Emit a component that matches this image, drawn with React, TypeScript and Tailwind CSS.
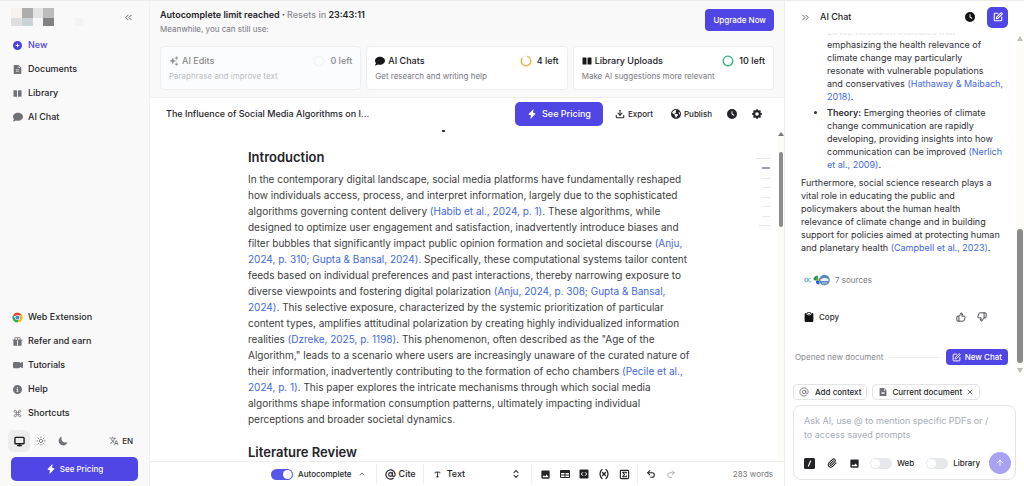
import { useState } from 'react';
import type { ReactNode } from 'react';
import { FaCirclePlus, FaComment, FaCircleInfo, FaClock, FaEarthAmericas } from 'react-icons/fa6';
import { BsCameraVideoFill, BsClipboardFill, BsGearFill } from 'react-icons/bs';
import { RiGiftFill } from 'react-icons/ri';
import { MdTranslate, MdImage } from 'react-icons/md';
import { IoMoon } from 'react-icons/io5';
import { PiFileTextFill, PiLightningFill } from 'react-icons/pi';
import {
  ArrowUp,
  AtSign,
  ChevronsLeft,
  ChevronsRight,
  ChevronsUpDown,
  ChevronUp,
  Command,
  Download,
  Monitor,
  Paperclip,
  Redo2,
  SquarePen,
  SquareSigma,
  Sun,
  ThumbsDown,
  ThumbsUp,
  Type,
  Undo2,
  Variable,
  X,
} from 'lucide-react';

function BookIcon({ className }: { className?: string }) {
  return (
    <svg viewBox="0 0 20 20" fill="currentColor" className={className} aria-hidden="true">
      <path d="M2 3h5.5c.8 0 1.5.5 1.5 1.200V17H2a1 1 0 0 1-1-1V4a1 1 0 0 1 1-1zM18 3h-5.500c-.8 0-1.500.5-1.500 1.200V17h7a1 1 0 0 0 1-1V4a1 1 0 0 0-1-1z" />
    </svg>
  );
}

function ChromeIcon({ className }: { className?: string }) {
  return (
    <svg viewBox="0 0 24 24" className={className} aria-hidden="true">
      <path d="M12 12 2.470 6.500A11 11 0 0 1 21.530 6.500L12 6.500z" fill="#ea4335" />
      <path d="M12 12 7.240 14.750 2.470 6.500A11 11 0 0 0 12 23l4.760-8.250z" fill="#34a853" />
      <path d="M12 6.500h9.530A11 11 0 0 1 12 23l4.760-8.250z" fill="#fbbc05" />
      <path d="M2.470 6.500 12 12V6.500z" fill="#ea4335" />
      <circle cx="12" cy="12" r="5.500" fill="#fff" />
      <circle cx="12" cy="12" r="4.300" fill="#4285f4" />
    </svg>
  );
}

function SparkleIcon({ className }: { className?: string }) {
  return (
    <svg viewBox="0 0 24 24" fill="currentColor" className={className} aria-hidden="true">
      <path d="M9 5c.7 4.500 2.500 6.300 7 7-4.500.7-6.300 2.500-7 7-.7-4.500-2.500-6.300-7-7 4.500-.7 6.300-2.500 7-7z" stroke="currentColor" />
      <path d="M18 1c.4 2.800 1.300 3.700 4 4-2.700.4-3.600 1.300-4 4-.4-2.700-1.300-3.600-4-4 2.700-.3 3.600-1.200 4-4zM18 16c.4 2.400 1.200 3.200 3.500 3.500-2.300.4-3.100 1.200-3.500 3.500-.4-2.300-1.200-3.100-3.500-3.500 2.300-.3 3.100-1.100 3.500-3.500z" stroke="currentColor" />
    </svg>
  );
}

function TableIcon({ className }: { className?: string }) {
  return (
    <svg viewBox="0 0 20 16" className={className} aria-hidden="true">
      <rect x="0" y="0" width="20" height="16" rx="2" fill="currentColor" />
      <path d="M2 6h7v3H2zM11 6h7v3h-7zM2 11h7v3H2zM11 11h7v3h-7z" fill="#fff" />
    </svg>
  );
}

function CodeIcon({ className }: { className?: string }) {
  return (
    <svg viewBox="0 0 20 20" className={className} aria-hidden="true">
      <rect x="1" y="1" width="18" height="18" rx="2" fill="currentColor" />
      <path d="M8 6.500 4.500 10 8 13.500M12 6.500l3.500 3.500-3.500 3.500" stroke="#fff" strokeWidth="2" fill="none" />
    </svg>
  );
}

function SlashIcon({ className }: { className?: string }) {
  return (
    <svg viewBox="0 0 22 22" className={className} aria-hidden="true">
      <rect width="22" height="22" rx="3" fill="currentColor" />
      <path d="M13.500 5 8.500 17" stroke="#fff" strokeWidth="2.200" />
    </svg>
  );
}

function SourceIcons() {
  return (
    <svg viewBox="0 0 26 12" className="h-3 w-[26px]" fill="none" aria-hidden="true">
      <circle cx="2.500" cy="6" r="1.700" stroke="#4aa3d9" strokeWidth=".9" />
      <path d="M6.800 4.200C5 4.200 4.300 5 4.200 6s.8 1.800 2.600 1.800" stroke="#4aa3d9" strokeWidth=".9" />
      <path d="M14 1.500a4.500 4.500 0 0 0-4.500 4.500l4.500 1z" fill="#34a853" />
      <path d="M9.500 4.500 12 2.500v4z" fill="#1f8f52" />
      <path d="M12.500 6 16 4v3z" fill="#f59e0b" />
      <path d="m12 7 3.500-.5v4A4.500 4.500 0 0 1 12 9z" fill="#2563eb" />
      <circle cx="20.500" cy="6" r="5.300" fill="#5b87bd" />
      <path d="M16.500 5.500c2-2 6-2 8 0v1.500h-8z" fill="#e8f0f8" />
      <path d="M18 9h5" stroke="#c7dbef" />
    </svg>
  );
}

function Quota({ color, dash }: { color: string; dash?: string }) {
  return (
    <svg viewBox="0 0 12 12" className="size-3" fill="none" aria-hidden="true">
      <circle cx="6" cy="6" r="4.800" stroke="#f1f1f2" strokeWidth="1.200" />
      {dash && <circle cx="6" cy="6" r="4.800" stroke={color} strokeWidth="1.400" strokeDasharray={dash} transform="rotate(-75 6 6)" />}
    </svg>
  );
}

function Cite({ children }: { children: ReactNode }) {
  return <a href="#" className="text-[#4169e1]">{children}</a>;
}

function Toggle({ id, on = false }: { id: string; on?: boolean }) {
  const [checked, setChecked] = useState(on);
  return (
    <input
      id={id}
      type="checkbox"
      role="switch"
      checked={checked}
      onChange={() => setChecked(!checked)}
      className="flex h-[11px] w-[22px] shrink-0 appearance-none items-center rounded-full bg-gray-200 p-px before:size-[9px] before:rounded-full before:bg-white checked:justify-end checked:bg-[#5457e8]"
    />
  );
}

const mainNav = [
  { label: 'New', icon: <FaCirclePlus className="size-[9px]" />, active: true },
  { label: 'Documents', icon: <PiFileTextFill className="size-[11px]" /> },
  { label: 'Library', icon: <BookIcon className="size-[9px]" /> },
  { label: 'AI Chat', icon: <FaComment className="size-[10px]" /> },
];

const helpNav = [
  { label: 'Web Extension', icon: <ChromeIcon className="size-[11px]" /> },
  { label: 'Refer and earn', icon: <RiGiftFill className="size-[11px]" /> },
  { label: 'Tutorials', icon: <BsCameraVideoFill className="size-[10px]" /> },
  { label: 'Help', icon: <FaCircleInfo className="size-[9px]" /> },
  { label: 'Shortcuts', icon: <Command className="size-[9px]" /> },
];

function NavItem({ label, icon, active }: { label: string; icon: ReactNode; active?: boolean }) {
  return (
    <a href="#" className={`flex h-6 items-center gap-[5px] pl-3 text-[9px] font-medium ${active ? 'text-[#4a42e0]' : 'text-[#242428]'}`}>
      <span className={`flex w-[11px] justify-center ${active ? '' : 'text-[#717178]'}`}>{icon}</span>
      {label}
    </a>
  );
}

function Sidebar() {
  return (
    <aside className="flex w-[150px] shrink-0 flex-col border-r border-[#f0f0f1] bg-[#f9f9fa] pb-[5px]">
      <div className="flex h-8 shrink-0 items-center justify-between pl-[11px] pr-[15px]">
        <svg viewBox="0 0 72 18" className="h-[18px] w-[72px]" aria-label="Logo" role="img">
          <path d="M0 0h11v10H0z" fill="#f7f2ef" />
          <path d="M11 0h11v10H11z" fill="#adadad" />
          <path d="M22 0h10v10H22z" fill="#e3e3e3" />
          <path d="M32 0h11v10H32z" fill="#bcbcbc" />
          <path d="M0 10h11v8H0z" fill="#dfdfdf" />
          <path d="M11 10h11v8H11z" fill="#cad3d8" />
          <path d="M22 10h10v8H22z" fill="#f6f6f6" />
          <path d="M32 10h11v8H32z" fill="#828284" />
          <path d="M64 10h8v8h-8z" fill="#f3f3f3" />
        </svg>
        <button aria-label="Collapse sidebar"><ChevronsLeft className="size-[11px] text-[#55555b]" /></button>
      </div>
      <nav className="flex flex-1 flex-col">
        {mainNav.map((item) => <NavItem key={item.label} {...item} />)}
        <div className="flex-1" />
        {helpNav.map((item) => <NavItem key={item.label} {...item} />)}
      </nav>
      <div className="flex items-center py-[5px] pl-2 pr-4">
        <button aria-label="System theme" className="flex size-[22px] items-center justify-center rounded-md bg-[#ececed]">
          <Monitor className="size-[11px] text-[#18181b]" strokeWidth={3} />
        </button>
        <button aria-label="Light theme" className="flex size-[22px] items-center justify-center text-[#717178]"><Sun className="size-[10px]" /></button>
        <button aria-label="Dark theme" className="flex size-[22px] items-center justify-center text-[#717178]"><IoMoon className="size-[10px]" /></button>
        <button className="ml-auto flex items-center gap-[3px] text-[8px] font-medium text-[#242428]">
          <MdTranslate className="size-[10px] text-[#717178]" />EN
        </button>
      </div>
      <button className="ml-[11px] mr-[11px] flex h-6 shrink-0 items-center justify-center gap-1 rounded-[5px] bg-[#4f46e5] text-[8px] font-medium text-white">
        <PiLightningFill className="size-[10px]" />See Pricing
      </button>
    </aside>
  );
}

type UsageCardProps = { icon: ReactNode; title: string; text: string; left: string; ring: ReactNode; used?: boolean };

function UsageCard({ icon, title, text, left, ring, used }: UsageCardProps) {
  return (
    <div className={`flex h-11 flex-col justify-center gap-px rounded border border-[#eeeeef] px-2 ${used ? 'bg-[#fbfcfd]' : 'bg-white'}`}>
      <div className={`flex h-[15px] items-center text-[9px] font-medium ${used ? 'text-[#89898e]' : 'text-[#18181b]'}`}>
        <span className="mr-[3px]">{icon}</span>
        {title}
        <span className="ml-auto mr-[5px]">{ring}</span>
        {left}
      </div>
      <p className={`text-[8px] leading-[14px] ${used ? 'text-[#bcbcc0]' : 'text-[#77777d]'}`}>{text}</p>
    </div>
  );
}

function Banner() {
  return (
    <section className="shrink-0 border-b border-[#eeeeef] bg-[#f9f9fa] px-[10px] pb-[7px] pt-[6px]">
      <div className="flex items-start justify-between">
        <div>
          <p className="text-[9px] font-semibold leading-4 text-[#242428]">
            Autocomplete limit reached · <span className="font-medium text-[#8b8b90]">Resets in</span> 23:43:11
          </p>
          <p className="text-[8px] leading-3 text-[#77777d]">Meanwhile, you can still use:</p>
        </div>
        <button className="mt-[2px] h-[22px] rounded bg-[#4f46e5] px-2 text-[8px] font-medium text-white">Upgrade Now</button>
      </div>
      <div className="mt-[11px] grid grid-cols-3 gap-[5px]">
        <UsageCard used icon={<SparkleIcon className="size-[10px]" />} title="AI Edits" text="Paraphrase and improve text" left="0 left" ring={<Quota color="#f1f1f2" />} />
        <UsageCard icon={<FaComment className="size-[10px]" />} title="AI Chats" text="Get research and writing help" left="4 left" ring={<Quota color="#e9b949" dash="24 7" />} />
        <UsageCard icon={<BookIcon className="size-[10px]" />} title="Library Uploads" text="Make AI suggestions more relevant" left="10 left" ring={<Quota color="#3fb57f" dash="31 0" />} />
      </div>
    </section>
  );
}

function DocumentHeader() {
  return (
    <header className="flex h-8 shrink-0 items-center pl-4 pr-[22px] text-[8px] font-medium text-[#242428]">
      <h1 className="flex-1 text-[9px]">The Influence of Social Media Algorithms on I...</h1>
      <button className="mr-3 flex h-6 items-center gap-[5px] rounded-[5px] bg-[#4f46e5] px-3 text-[9px] text-white">
        <PiLightningFill className="size-[10px]" />See Pricing
      </button>
      <button className="mr-[18px] flex items-center gap-[3px]"><Download className="size-[10px]" strokeWidth={2.5} />Export</button>
      <button className="mr-[15px] flex items-center gap-[3px]"><FaEarthAmericas className="size-[10px]" />Publish</button>
      <button aria-label="History" className="mr-[15px]"><FaClock className="size-[10px]" /></button>
      <button aria-label="Settings"><BsGearFill className="size-[10px]" /></button>
    </header>
  );
}

// outline markers, one per heading of the document
const outline = [
  'h-px w-[14px] bg-gray-200',
  'h-[2px] w-[8px] bg-gray-400',
  'h-px w-[8px] bg-gray-200',
  'h-px w-[8px] bg-gray-200',
  'h-px w-[8px] bg-gray-200',
  'h-px w-[8px] bg-gray-200',
  'h-px w-[8px] bg-gray-200',
  'h-px w-[11px] bg-gray-200',
];

function Editor() {
  return (
    <div className="flex min-h-0 flex-1 overflow-hidden">
      <div className="flex min-w-0 flex-1 flex-col items-center pl-10 pr-1">
        <article className="w-full max-w-[444px] text-[10px] leading-4 text-[#3c3c41]">
          <div className="ml-[194px] h-[2px] w-[3px] bg-[#3c3c41]" />
          <h2 className="mt-[15px] text-[13px] font-semibold leading-5 text-[#242428]">Introduction</h2>
          <p className="mt-1">
            In the contemporary digital landscape, social media platforms have fundamentally reshaped how individuals
            access, process, and interpret information, largely due to the sophisticated algorithms governing content
            delivery <Cite>(Habib et al., 2024, p. 1)</Cite>. These algorithms, while designed to optimize user
            engagement and satisfaction, inadvertently introduce biases and filter bubbles that significantly impact
            public opinion formation and societal discourse <Cite>(Anju, 2024, p. 310; Gupta &amp; Bansal, 2024)</Cite>.
            Specifically, these computational systems tailor content feeds based on individual preferences and past
            interactions, thereby narrowing exposure to diverse viewpoints and fostering digital
            polarization <Cite>(Anju, 2024, p. 308; Gupta &amp; Bansal, 2024)</Cite>. This selective exposure,
            characterized by the systemic prioritization of particular content types, amplifies attitudinal polarization
            by creating highly individualized information realities <Cite>(Dzreke, 2025, p. 1198)</Cite>. This
            phenomenon, often described as the "Age of the Algorithm," leads to a scenario where users are increasingly
            unaware of the curated nature of their information, inadvertently contributing to the formation of echo
            chambers <Cite>(Pecile et al., 2024, p. 1)</Cite>. This paper explores the intricate mechanisms through
            which social media algorithms shape information consumption patterns, ultimately impacting individual
            perceptions and broader societal dynamics.
          </p>
          <h2 className="mt-[15px] text-[13px] font-semibold leading-5 text-[#242428]">Literature Review</h2>
        </article>
      </div>
      <div className="flex h-24 w-4 shrink-0 flex-col items-end justify-between pt-7">
        {outline.map((bar, i) => <span key={i} className={bar} />)}
      </div>
      <div className="ml-[7px] flex w-[7px] shrink-0 flex-col items-center bg-[#fdfcf9] pt-[2px]">
        <svg viewBox="0 0 6 4" className="h-1 w-[6px]" fill="#77777a"><path d="M3 0 6 4H0z" /></svg>
        <span className="mt-4 h-[75px] w-1 rounded-full bg-[#8b8b8b]" />
      </div>
    </div>
  );
}

function Toolbar() {
  return (
    <footer className="flex h-[25px] shrink-0 items-center border-t border-[#eeeeef] pl-[121px] pr-[11px] text-[9px] font-medium text-[#242428]">
      <Toggle id="autocomplete" on />
      <label htmlFor="autocomplete" className="ml-[5px] text-[8px]">Autocomplete</label>
      <button aria-label="Autocomplete options" className="ml-[6px]"><ChevronUp className="size-2" /></button>
      <span className="ml-[10px] h-5 w-px bg-[#eeeeef]" />
      <button className="ml-2 flex items-center gap-[3px]"><AtSign className="size-[11px]" strokeWidth={2.5} />Cite</button>
      <span className="ml-[7px] h-5 w-px bg-[#eeeeef]" />
      <button className="flex w-[107px] items-center px-[10px]">
        <Type className="mr-[6px] size-[7px]" strokeWidth={3} />Text
        <ChevronsUpDown className="ml-auto size-[10px]" strokeWidth={2.5} />
      </button>
      <span className="h-5 w-px bg-[#eeeeef]" />
      <div className="ml-2 mr-[7px] flex items-center gap-[9px]">
        <button aria-label="Insert image"><MdImage className="size-[11px]" /></button>
        <button aria-label="Insert table"><TableIcon className="h-2 w-[10px]" /></button>
        <button aria-label="Insert code"><CodeIcon className="size-[10px]" /></button>
        <button aria-label="Insert variable"><Variable className="size-3" strokeWidth={2.5} /></button>
        <button aria-label="Insert equation"><SquareSigma className="size-[11px]" strokeWidth={2.5} /></button>
      </div>
      <span className="h-5 w-px bg-[#eeeeef]" />
      <button aria-label="Undo" className="ml-2"><Undo2 className="size-[10px]" strokeWidth={2.5} /></button>
      <button aria-label="Redo" className="ml-[10px] text-[#a4a4a9]"><Redo2 className="size-[10px]" /></button>
      <span className="ml-auto text-[8px] font-normal text-[#77777d]">283 words</span>
    </footer>
  );
}

function ChatMessages() {
  return (
    <div className="flex min-h-0 flex-1 overflow-hidden">
      <div className="min-w-0 flex-1 pl-2">
        <div className="-mt-2 pl-2 pr-3 text-[9px] leading-[13px] text-[#303035]">
          <ul className="list-disc pl-[26px]">
            <li className="list-none">
              <span className="text-[#e4e4e8]"><a href="#" className="text-[#dbe2fa]">2018)</a>. Research indicates that</span>
              <br />
              emphasizing the health relevance of climate change may particularly
              <br />
              resonate with vulnerable populations
              <br />
              and conservatives <Cite>(Hathaway &amp; Maibach, 2018)</Cite>.
            </li>
            <li className="mt-[3px]">
              <strong className="font-semibold">Theory:</strong> Emerging theories of climate change communication are
              rapidly developing, providing insights into how communication can be improved <Cite>(Nerlich et al., 2009)</Cite>.
            </li>
          </ul>
          <p className="mt-[5px]">
            Furthermore, social science research plays a vital role in educating the public and policymakers about the
            human health relevance of climate change and in building support for policies aimed at protecting human and
            planetary health <Cite>(Campbell et al., 2023)</Cite>.
          </p>
        </div>
        <button className="mt-[19px] flex items-center gap-[5px] pl-[11px] text-[8px] leading-[14px] text-[#77777d]">
          <SourceIcons />7 sources
        </button>
        <div className="mt-[22px] flex h-4 items-center pl-[11px] pr-[29px] text-[#303035]">
          <button className="flex items-center gap-[5px] text-[8px] font-medium"><BsClipboardFill className="size-[10px] text-[#111113]" />Copy</button>
          <button aria-label="Good answer" className="ml-auto"><ThumbsUp className="size-[10px]" /></button>
          <button aria-label="Bad answer" className="ml-[11px]"><ThumbsDown className="size-[10px]" /></button>
        </div>
        <div className="mt-6 flex items-center gap-[6px] pl-[2px] pr-2 text-[8px]">
          <span className="whitespace-nowrap text-[#89898e]">Opened new document</span>
          <span className="h-px flex-1 bg-[#eeeeef]" />
          <button className="flex h-4 shrink-0 items-center gap-1 rounded bg-[#4f46e5] px-[6px] font-medium text-white">
            <SquarePen className="size-[9px]" strokeWidth={2.5} />New Chat
          </button>
        </div>
      </div>
      <div className="flex w-2 shrink-0 flex-col items-center bg-[#fdfcf9] py-[3px]">
        <svg viewBox="0 0 6 5" className="h-[5px] w-[6px]" fill="#bcbcbc"><path d="M3 0 6 5H0z" /></svg>
        <span className="flex-1" />
        <span className="mb-[5px] h-[134px] w-[6px] rounded-full bg-[#8b8b8b]" />
        <svg viewBox="0 0 6 5" className="h-[5px] w-[6px]" fill="#bcbcbc"><path d="M3 5 6 0H0z" /></svg>
      </div>
    </div>
  );
}

function Composer() {
  const [prompt, setPrompt] = useState('');
  return (
    <div className="shrink-0 px-2 pb-[6px] pt-2 text-[8px] font-medium text-[#242428]">
      <div className="flex gap-[5px]">
        <button className="flex h-4 items-center gap-[6px] rounded border border-[#e4e4e7] px-[5px]">
          <AtSign className="size-[10px] text-[#717178]" />Add context
        </button>
        <button className="flex h-4 items-center gap-1 rounded border border-[#e4e4e7] px-[5px]">
          <PiFileTextFill className="size-[10px] text-[#717178]" />Current document<X className="size-2" />
        </button>
      </div>
      <div className="mt-[5px] rounded-[8px] border border-[#e4e4e7] pb-[5px] pl-[10px] pr-1 pt-2">
        <textarea
          aria-label="Message"
          rows={2}
          value={prompt}
          onChange={(e) => setPrompt(e.target.value)}
          placeholder="Ask AI, use @ to mention specific PDFs or / to access saved prompts"
          className="block w-full resize-none overflow-hidden pr-4 text-[9px] font-normal leading-[14px] outline-none placeholder:text-[#a5acb8]"
        />
        <div className="mt-[10px] flex items-center">
          <button aria-label="Commands"><SlashIcon className="size-[11px]" /></button>
          <button aria-label="Attach file" className="ml-3"><Paperclip className="size-[10px]" strokeWidth={2.5} /></button>
          <button aria-label="Add image" className="ml-3"><MdImage className="size-[11px]" /></button>
          <label className="ml-[10px] flex items-center gap-[5px]"><Toggle id="web" />Web</label>
          <label className="ml-3 flex items-center gap-[5px]"><Toggle id="library" />Library</label>
          <button aria-label="Send" className="ml-auto flex size-[22px] items-center justify-center rounded-full bg-[#a7a2f2] text-white">
            <ArrowUp className="size-[10px]" />
          </button>
        </div>
      </div>
    </div>
  );
}

function ChatPanel() {
  return (
    <aside className="flex w-[240px] shrink-0 flex-col border-l border-[#eeeeef] bg-white">
      <header className="flex h-8 shrink-0 items-center pl-[15px] pr-4">
        <button aria-label="Collapse chat"><ChevronsRight className="size-[11px] text-[#55555b]" /></button>
        <h2 className="ml-[9px] flex-1 text-[9px] font-medium text-[#242428]">AI Chat</h2>
        <button aria-label="Chat history" className="mr-3"><FaClock className="size-[10px] text-[#111113]" /></button>
        <button aria-label="New chat" className="flex size-[21px] items-center justify-center rounded-[5px] bg-[#4f46e5] text-white">
          <SquarePen className="size-[10px]" strokeWidth={2.5} />
        </button>
      </header>
      <ChatMessages />
      <Composer />
    </aside>
  );
}

export default function App() {
  return (
    <div className="flex h-screen overflow-hidden border-t border-[#ececed] bg-white font-['Inter',sans-serif] antialiased">
      <Sidebar />
      <main className="flex min-w-0 flex-1 flex-col">
        <Banner />
        <DocumentHeader />
        <Editor />
        <Toolbar />
      </main>
      <ChatPanel />
    </div>
  );
}
